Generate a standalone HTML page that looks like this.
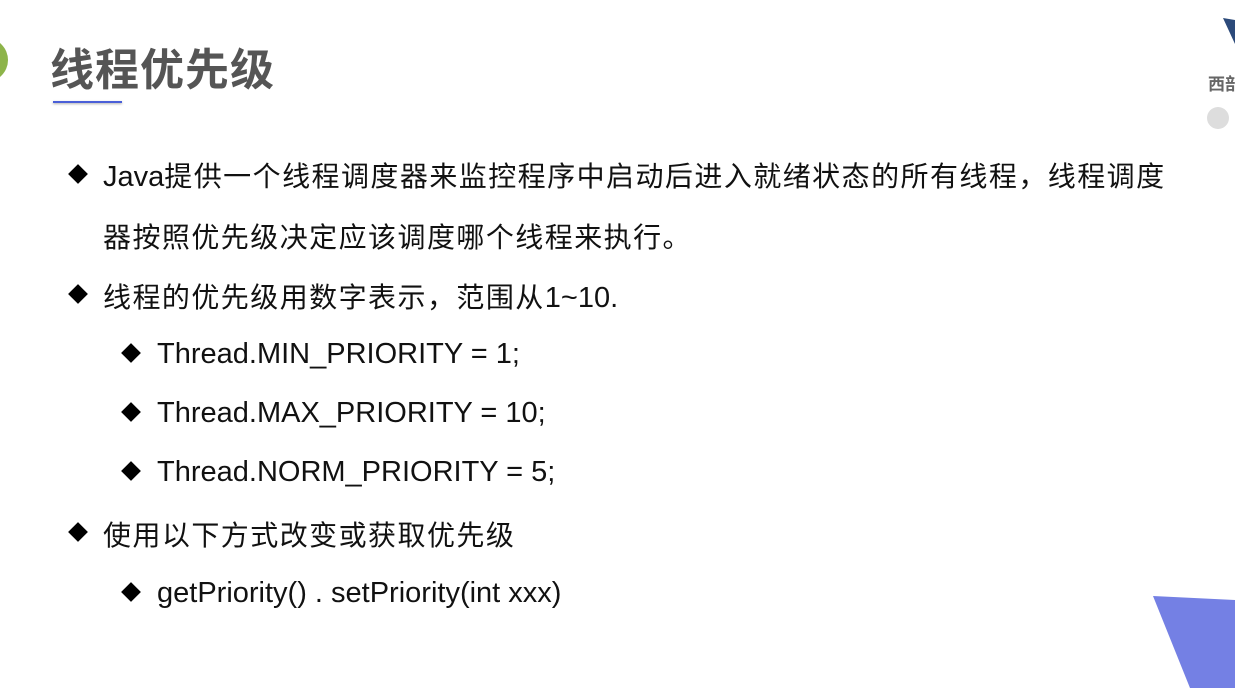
<!DOCTYPE html>
<html><head><meta charset="utf-8"><style>
body{margin:0;width:1235px;height:688px;overflow:hidden;background:#fff;position:relative;font-family:"Liberation Sans","Noto Sans CJK SC",sans-serif;color:#111}
.t{position:absolute;white-space:nowrap}
.cjk{font-size:28px;letter-spacing:1.45px}
.cjk span{letter-spacing:0;font-size:29px}
.d{position:absolute;width:14px;height:14px;background:#000;transform:rotate(45deg)}
.s{font-size:29px}
</style></head><body>
<div style="position:absolute;left:-36px;top:38px;width:44px;height:44px;border-radius:50%;background:#8db44a"></div>
<div class="t" style="left:50px;top:34px;font-size:44px;font-weight:bold;color:#555;letter-spacing:1px">线程优先级</div>
<div style="position:absolute;left:53px;top:101px;width:69px;height:2px;background:#4a5fd8;box-shadow:0 1px 2px #aaa"></div>
<svg style="position:absolute;left:1205px;top:14px" width="30" height="30"><polygon points="18,4 30,6 30,30" fill="#2c4a7a"/></svg>
<div class="t" style="left:1208px;top:70px;font-size:17px;font-weight:bold;color:#666">西部</div>
<div style="position:absolute;left:1207px;top:107px;width:22px;height:22px;border-radius:50%;background:#ddd"></div>
<svg style="position:absolute;left:1150px;top:590px" width="85" height="98"><polygon points="3,6 85,10 85,98 40,98" fill="#7480e4"/></svg>

<div class="d" style="left:71px;top:167px"></div>
<div class="t cjk" style="left:103px;top:155px"><span>Java</span>提供一个线程调度器来监控程序中启动后进入就绪状态的所有线程，线程调度</div>
<div class="t cjk" style="left:103px;top:216px">器按照优先级决定应该调度哪个线程来执行。</div>
<div class="d" style="left:71px;top:287px"></div>
<div class="t cjk" style="left:103px;top:276px">线程的优先级用数字表示，范围从<span>1~10.</span></div>
<div class="d" style="left:124px;top:346px"></div>
<div class="t s" style="left:157px;top:338px">Thread.MIN_PRIORITY = 1;</div>
<div class="d" style="left:124px;top:405px"></div>
<div class="t s" style="left:157px;top:397px">Thread.MAX_PRIORITY = 10;</div>
<div class="d" style="left:124px;top:464px"></div>
<div class="t s" style="left:157px;top:456px">Thread.NORM_PRIORITY = 5;</div>
<div class="d" style="left:71px;top:525px"></div>
<div class="t cjk" style="left:103px;top:514px">使用以下方式改变或获取优先级</div>
<div class="d" style="left:124px;top:585px"></div>
<div class="t s" style="left:157px;top:577px">getPriority() . setPriority(int xxx)</div>
</body></html>
